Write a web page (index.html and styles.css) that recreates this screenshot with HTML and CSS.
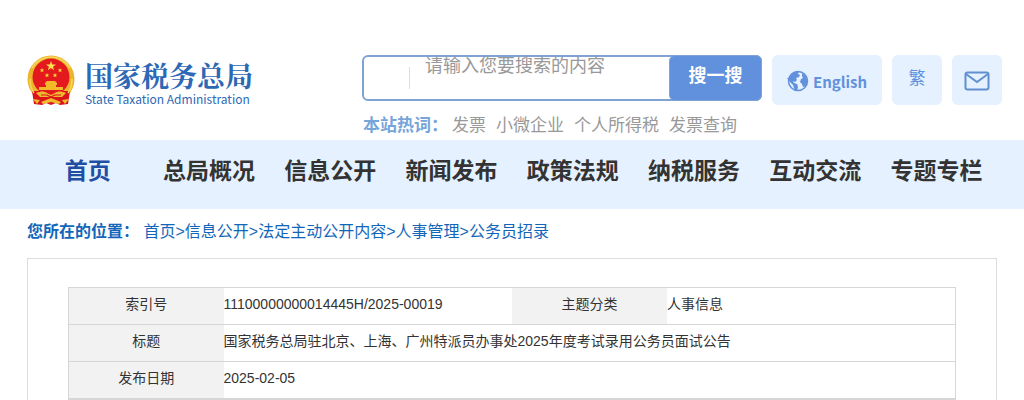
FILE: index.html
```html
<!DOCTYPE html>
<html lang="zh-CN">
<head>
<meta charset="utf-8">
<meta name="viewport" content="width=device-width, initial-scale=1">
<title>国家税务总局</title>
<link rel="stylesheet" href="styles.css">
</head>
<body>
<header class="header">
  <a class="logo" href="#">
    <svg class="emblem" viewBox="0 0 48 52" aria-hidden="true">
      <circle cx="24" cy="24" r="23.5" fill="#edb52c"/>
      <path d="M5 36h38l-2 13-8 1-4-2-5 2-5-2-4 2-8-1z" fill="#d9141b"/>
      <path d="M3 24c0 6 1 10 4 14M45 24c0 6-1 10-4 14M5 13C9 7 16 2 24 2s15 5 19 11" fill="none" stroke="#f7d75a" stroke-width="1.5"/>
      <circle cx="24" cy="22" r="18.500" fill="#e3191d"/>
      <path d="M24 6l1.200 3.500H29l-3 2.200 1.200 3.600L24 13.100l-3.200 2.200 1.200-3.600-3-2.200h3.800z" fill="#ffe14d"/>
      <path d="M15 13l.6 1.500h1.700l-1.300 1.100.5 1.700-1.500-1-1.500 1 .5-1.700-1.300-1.100h1.700zM33 13l.6 1.500h1.700l-1.300 1.100.5 1.700-1.500-1-1.500 1 .5-1.700-1.300-1.100h1.700zM20 18l.6 1.500h1.700L21 20.600l.5 1.700-1.500-1-1.500 1 .5-1.700-1.300-1.100h1.700zM28 18l.6 1.500h1.700L29 20.600l.5 1.700-1.500-1-1.500 1 .5-1.700-1.300-1.100h1.700z" fill="#ffd83b"/>
      <path d="M18 28l2-2h8l2 2v2h-1v2h7v3H12v-3h7v-2h-1z" fill="#f2b928"/>
      <path d="M9 38c5-2 8-2 11 0l4 2 4-2c3-2 6-2 11 0l-4 4H13z" fill="#f0ba2e"/>
      <path d="M14 40h6l4 2 4-2h6" fill="none" stroke="#d9141b" stroke-width="1.200"/>
      <path d="M6 44l7 1-3 4zM42 44l-7 1 3 4zM14 47l10-4 10 4-2 2-8-2-8 2z" fill="#f0ba2e"/>
    </svg>
    <span class="logo-text">
      <span class="logo-cn">国家税务总局</span>
      <span class="logo-en">State Taxation Administration</span>
    </span>
  </a>
  <div class="search">
    <form class="search-box">
      <span class="search-divider"></span>
      <input class="search-input" type="text" aria-label="搜索" placeholder="请输入您要搜索的内容">
      <button class="search-button" type="button">搜一搜</button>
    </form>
    <div class="hot">
      <strong class="hot-label">本站热词：</strong>
      <a href="#">发票</a>
      <a href="#">小微企业</a>
      <a href="#">个人所得税</a>
      <a href="#">发票查询</a>
    </div>
  </div>
  <div class="tools">
    <a class="tool tool-english" href="#">
      <svg class="globe" viewBox="0 0 22 22" aria-hidden="true">
        <circle cx="11" cy="11" r="9.500" fill="#e5f1ff" stroke="#6190dd" stroke-width="1.500"/>
        <path d="M2 8C4 3 8 1 12 1.500L11 4l2 1-1 2-3 1 1 2-2 2-2-1 1 2 3 1 1 3-1 4c-3 0-3-4-4-6-2-2-4-4-6-7zM15 3l4 3 1.500 5-1.500 5-3 1-1-3-2-2 1-3 2-1-1-2z" fill="#6190dd"/>
      </svg>
      <span>English</span>
    </a>
    <a class="tool tool-trad" href="#">繁</a>
    <a class="tool tool-mail" href="#" aria-label="邮箱">
      <svg class="mail" viewBox="0 0 26 20" fill="none" stroke="#6190cf" stroke-width="2" aria-hidden="true">
        <rect x="1.500" y="1.500" width="23" height="17" rx="2"/>
        <path d="M2 3l11 8 11-8"/>
      </svg>
    </a>
  </div>
</header>
<nav class="nav">
  <div class="nav-list">
    <a class="active" href="#">首页</a>
    <a href="#">总局概况</a>
    <a href="#">信息公开</a>
    <a href="#">新闻发布</a>
    <a href="#">政策法规</a>
    <a href="#">纳税服务</a>
    <a href="#">互动交流</a>
    <a href="#">专题专栏</a>
  </div>
</nav>
<main class="main">
  <div class="crumbs"><strong>您所在的位置：</strong> <a href="#">首页</a>&gt;<a href="#">信息公开</a>&gt;<a href="#">法定主动公开内容</a>&gt;<a href="#">人事管理</a>&gt;<a href="#">公务员招录</a></div>
  <article class="panel">
    <table class="info">
      <colgroup><col class="col-label"><col class="col-value"><col class="col-label"><col class="col-value"></colgroup>
      <tbody>
        <tr><th scope="row">索引号</th><td>11100000000014445H/2025-00019</td><th scope="row">主题分类</th><td>人事信息</td></tr>
        <tr><th scope="row">标题</th><td colspan="3">国家税务总局驻北京、上海、广州特派员办事处2025年度考试录用公务员面试公告</td></tr>
        <tr><th scope="row">发布日期</th><td colspan="3">2025-02-05</td></tr>
      </tbody>
    </table>
  </article>
</main>
</body>
</html>
```
FILE: styles.css
```css
* { box-sizing: border-box; }
body {
  margin: 0;
  background: #fff;
  color: #333;
  font-family: "Liberation Sans", "Noto Sans CJK SC", sans-serif;
  font-size: 14px;
}
a { color: inherit; text-decoration: none; }

.header {
  display: flex;
  align-items: flex-start;
  gap: 10px;
  padding: 55px 22px 2px 27px;
}
.logo { display: flex; gap: 10px; margin-right: auto; color: #2d68b5; }
.emblem { width: 48px; height: 52px; }
.logo-text {
  display: flex;
  flex-direction: column;
  padding-top: 4px;
  font-family: "Noto Sans CJK SC", sans-serif;
  white-space: nowrap;
}
.logo-cn {
  font-family: "Noto Serif CJK SC", "Noto Sans CJK SC", serif;
  font-size: 28px;
  font-weight: 700;
  line-height: 32px;
}
.logo-en { font-size: 12px; line-height: 16px; }

.search { width: 400px; }
.search-box {
  display: flex;
  height: 46px;
  border: 2px solid #7fa3d3;
  border-radius: 6px;
}
.search-divider { width: 1px; height: 22px; margin: 10px 0 0 45px; background: #ddd; }
.search-input {
  flex: 1;
  min-width: 0;
  height: 24px;
  margin-top: -5px;
  padding: 0 0 0 15px;
  border: 0;
  outline: 0;
  background: transparent;
  font: 18px/24px "Noto Sans CJK SC", sans-serif;
}
.search-input::placeholder { color: #999; }
.search-button {
  width: 93px;
  margin: -2px -2px -2px 0;
  padding: 0 0 8px;
  border: 1px solid #7fa3d3;
  border-radius: 6px;
  background: #6190dd;
  color: #fff;
  font: bold 18px/24px "Noto Sans CJK SC", sans-serif;
}
.hot {
  display: flex;
  gap: 10px;
  padding: 13px 0 0 1px;
  color: #999;
  font-size: 17px;
  line-height: 24px;
  white-space: nowrap;
}
.hot-label { margin-right: -6px; color: #76a5da; }

.tools { display: flex; gap: 10px; }
.tool {
  display: flex;
  align-items: center;
  justify-content: center;
  width: 50px;
  height: 50px;
  border-radius: 6px;
  background: #e5f1ff;
  color: #6190dd;
  font-family: "Noto Sans CJK SC", sans-serif;
}
.tool-english { width: 110px; gap: 4px; padding-top: 2px; font-size: 15px; font-weight: 700; }
.tool-trad { padding-bottom: 7px; font-size: 17px; }
.tool-mail { padding-top: 2px; }
.globe { width: 22px; height: 22px; }
.mail { width: 26px; height: 20px; }

.nav { padding: 0 27px; background: #e5f1ff; }
.nav-list {
  display: grid;
  grid-template-columns: repeat(8, 1fr);
  padding: 14px 0 21px;
  font-size: 23px;
  font-weight: 700;
  line-height: 34px;
  text-align: center;
  white-space: nowrap;
}
.active { color: #1f4fa5; }

.main { padding: 0 27px; }
.crumbs { padding: 11px 0 14px; color: #1266b9; font-size: 16px; line-height: 24px; }
.panel { padding: 28px 40px; border: 1px solid #ddd; }
.info {
  width: 100%;
  border-collapse: collapse;
  table-layout: fixed;
  border: 1px solid #d6d6d6;
  border-bottom-width: 2px;
}
.col-label { width: 155px; }
.info tr { border-bottom: 1px solid #d6d6d6; }
.info tr:last-child { border-bottom-width: 2px; }
.info th, .info td { height: 37px; padding: 0 0 4px; font-weight: 400; line-height: 20px; text-align: left; }
.info th { background: #f2f2f2; text-align: center; }
```
